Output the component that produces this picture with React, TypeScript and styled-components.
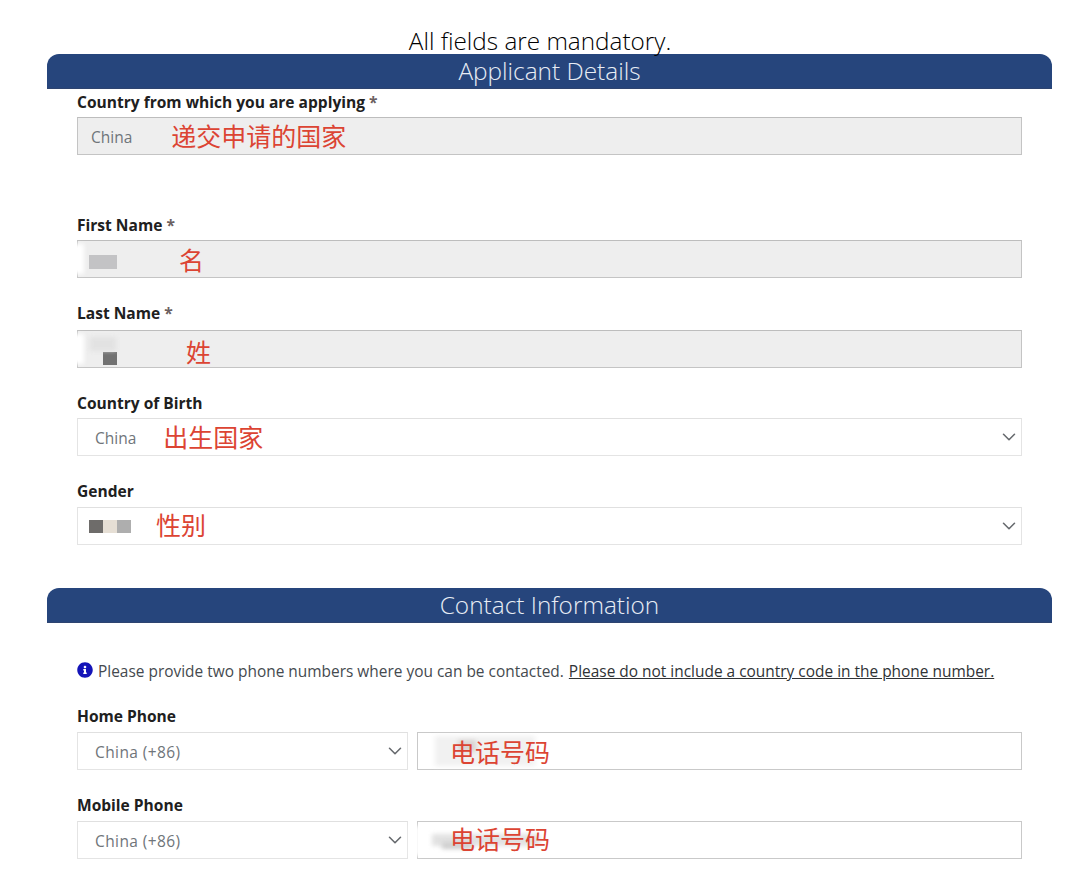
import styled, { createGlobalStyle } from "styled-components";
import { ChevronDown } from "lucide-react";
import { FaInfoCircle } from "react-icons/fa";

const GlobalStyle = createGlobalStyle`
  html, body {
    margin: 0;
    padding: 0;
    background: #ffffff;
  }
  body {
    font-family: "Open Sans", "Noto Sans", "Noto Sans CJK SC", sans-serif;
    color: #212529;
  }
`;

const Page = styled.div`
  width: 1080px;
  height: 885px;
  overflow: hidden;
  padding-top: 28px;
  box-sizing: border-box;
`;

const Mandatory = styled.h1`
  margin: 0;
  height: 26px;
  font-size: 24.3px;
  line-height: 26px;
  font-weight: 300;
  text-align: center;
  color: #000000;
`;

const Section = styled.section`
  margin: 0 28px 0 47px;
`;

const Banner = styled.h2<{ $top?: number }>`
  box-sizing: border-box;
  margin: ${p => p.$top ?? 0}px 0 0;
  height: 35px;
  background: #26457c;
  border-radius: 12px 12px 0 0;
  border-bottom: 1px solid #2e4470;
  font-size: 24.4px;
  line-height: 33px;
  font-weight: 300;
  text-align: center;
  color: #e8edf5;
`;

const Body = styled.div`
  padding: 0 30px;
`;

const Group = styled.div<{ $top?: number }>`
  margin-top: ${p => p.$top ?? 23}px;
`;

const Label = styled.label<{ $gap?: number }>`
  display: block;
  height: 24px;
  margin-bottom: ${p => p.$gap ?? 3}px;
  font-size: 15.55px;
  line-height: 24px;
  font-weight: 700;
  color: #202020;
`;

const Star = styled.span`
  color: #6b5f60;
`;

const Control = styled.div<{ $disabled?: boolean; $dark?: boolean; $grow?: boolean; $width?: number }>`
  position: relative;
  display: flex;
  align-items: center;
  box-sizing: border-box;
  height: 38px;
  padding-right: 12px;
  flex: ${p => (p.$grow ? "1 1 0" : "none")};
  width: ${p => (p.$width ? `${p.$width}px` : "auto")};
  background: ${p => (p.$disabled ? "#eeeeee" : "#ffffff")};
  border: 1px solid ${p => (p.$disabled ? "#c4c4c4" : p.$dark ? "#c9c9c9" : "#e4e4e4")};
  border-top-color: ${p => (p.$disabled ? "#bdbdbd" : p.$dark ? "#c9c9c9" : "#e0e0e0")};
`;

const Value = styled.span<{ $left: number }>`
  margin-left: ${p => p.$left}px;
  margin-top: 2px;
  font-size: 15.5px;
  color: #6f757a;
  white-space: nowrap;
`;

const PhoneValue = styled(Value)`
  letter-spacing: 0.4px;
`;

const Note = styled.span<{ $left: number; $lift?: number }>`
  position: relative;
  margin-left: ${p => p.$left}px;
  margin-top: ${p => p.$lift ?? 0}px;
  font-family: "Noto Sans CJK SC", sans-serif;
  font-size: 25px;
  line-height: 30px;
  color: #dc4433;
  white-space: nowrap;
`;

const Arrow = styled(ChevronDown)`
  position: absolute;
  right: 1px;
  top: 7px;
  width: 22px;
  height: 22px;
  color: #66696d;
  stroke-width: 1.7;
`;

/* blurred-out personal data: a few mosaic tiles sitting in the field */
const Mosaic = styled.div<{ $left: number; $top?: number }>`
  display: flex;
  flex: none;
  margin-left: ${p => p.$left}px;
  margin-top: ${p => p.$top ?? 0}px;
`;

const Tile = styled.i<{ $w: number; $h: number; $color: string }>`
  display: block;
  width: ${p => p.$w}px;
  height: ${p => p.$h}px;
  background: ${p => p.$color};
`;

const Smudge = styled.div<{ $x: number; $y: number; $w: number; $h: number; $color?: string }>`
  position: absolute;
  left: ${p => p.$x}px;
  top: ${p => p.$y}px;
  width: ${p => p.$w}px;
  height: ${p => p.$h}px;
  background: ${p => p.$color ?? "#ffffff"};
  filter: blur(2px);
`;

const Info = styled.p`
  display: flex;
  align-items: center;
  gap: 5px;
  height: 20px;
  margin: 38px 0 0;
  font-size: 15.45px;
  line-height: 20px;
  color: #454a4f;
  white-space: nowrap;
`;

const InfoIcon = styled(FaInfoCircle)`
  flex: none;
  width: 16px;
  height: 16px;
  margin-top: -3px;
  color: #1414b8;
`;

const Underlined = styled.span`
  margin-left: 1px;
  color: #303336;
  text-decoration: underline;
`;

const PhoneRow = styled.div`
  display: flex;
  gap: 9px;
`;

const phones = [
  {
    label: "Home Phone",
    top: 23,
    lift: 0,
    smudges: [
      { x: 17, y: 3, w: 100, h: 30, color: "#f1f1f1" },
      { x: 40, y: 7, w: 18, h: 12, color: "#d8d4d2" },
    ],
  },
  {
    label: "Mobile Phone",
    top: 23,
    lift: -4,
    smudges: [
      { x: -8, y: 4, w: 10, h: 30, color: "#ffffff" },
      { x: 14, y: 12, w: 108, h: 12, color: "#e2e2e2" },
      { x: 24, y: 20, w: 30, h: 7, color: "#cfcfcf" },
    ],
  },
];

function Phone({ label, top, lift, smudges }: (typeof phones)[number]) {
  return (
    <Group $top={top}>
      <Label $gap={4}>{label}</Label>
      <PhoneRow>
        <Control $width={331}>
          <PhoneValue $left={17}>China (+86)</PhoneValue>
          <Arrow />
        </Control>
        <Control $grow $dark>
          {smudges.map((s, i) => (
            <Smudge key={i} $x={s.x} $y={s.y} $w={s.w} $h={s.h} $color={s.color} />
          ))}
          <Note $left={32} $lift={lift}>电话号码</Note>
        </Control>
      </PhoneRow>
    </Group>
  );
}

export default function App() {
  return (
    <Page>
      <GlobalStyle />
      <Mandatory>All fields are mandatory.</Mandatory>

      <Section>
        <Banner>Applicant Details</Banner>
        <Body>
          <Group $top={1}>
            <Label>Country from which you are applying <Star>*</Star></Label>
            <Control $disabled>
              <Value $left={13}>China</Value>
              <Note $left={39} $lift={-2}>递交申请的国家</Note>
            </Control>
          </Group>

          <Group $top={58}>
            <Label>First Name <Star>*</Star></Label>
            <Control $disabled>
              <Smudge $x={-6} $y={3} $w={12} $h={30} />
              <Mosaic $left={11} $top={6}>
                <Tile $w={28} $h={14} $color="#c3c3c5" />
              </Mosaic>
              <Note $left={62}>名</Note>
            </Control>
          </Group>

          <Group $top={23}>
            <Label $gap={5}>Last Name <Star>*</Star></Label>
            <Control $disabled>
              <Smudge $x={-6} $y={3} $w={12} $h={30} />
              <Smudge $x={12} $y={6} $w={26} $h={14} $color="#e2e2e2" />
              <Mosaic $left={25} $top={18}>
                <Tile $w={14} $h={13} $color="#727272" />
              </Mosaic>
              <Note $left={69} $lift={4}>姓</Note>
            </Control>
          </Group>

          <Group $top={23}>
            <Label>Country of Birth</Label>
            <Control>
              <Value $left={17}>China</Value>
              <Note $left={27} $lift={-2}>出生国家</Note>
              <Arrow />
            </Control>
          </Group>

          <Group $top={23}>
            <Label $gap={4}>Gender</Label>
            <Control>
              <Mosaic $left={11}>
                <Tile $w={14} $h={13} $color="#6e6c6a" />
                <Tile $w={14} $h={13} $color="#e6dfd5" />
                <Tile $w={14} $h={13} $color="#aeaeae" />
              </Mosaic>
              <Note $left={25} $lift={-4}>性别</Note>
              <Arrow />
            </Control>
          </Group>
        </Body>

        <Banner $top={43}>Contact Information</Banner>
        <Body>
          <Info>
            <InfoIcon />
            <span>
              Please provide two phone numbers where you can be contacted.{" "}
              <Underlined>Please do not include a country code in the phone number.</Underlined>
            </span>
          </Info>
          {phones.map(p => (
            <Phone key={p.label} {...p} />
          ))}
        </Body>
      </Section>
    </Page>
  );
}
